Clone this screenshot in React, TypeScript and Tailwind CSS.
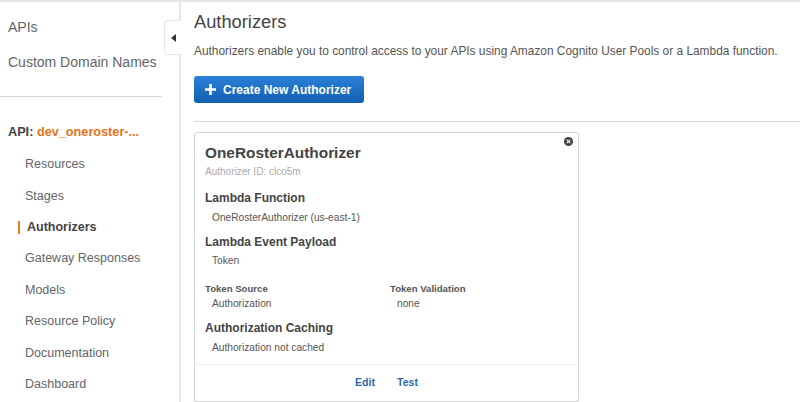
const navItems = ["Resources", "Stages", "Authorizers", "Gateway Responses", "Models", "Resource Policy", "Documentation", "Dashboard"];

function SideNav() {
	return (
		<aside className="relative w-[181px] shrink-0 border-r-2 border-[#e4e6e8] pl-2 text-[#5f6569]">
			<div className="pt-[13px] text-[14px] leading-[24px]">APIs</div>
			<div className="mt-[11px] text-[14px] leading-[24px]">Custom Domain Names</div>
			<div className="mt-[22px] mr-[17px] -ml-2 h-px bg-[#d5d8da]"></div>
			<div className="mt-[26px] text-[12.7px] leading-[18px] font-bold text-[#444]">
				API: <span className="text-[#e8711a]">dev_oneroster-...</span>
			</div>
			<nav className="mt-[8px] flex flex-col text-[12.5px]">
				{navItems.map((item) =>
					item === "Authorizers" ? (
						<div key={item} className="flex h-[31.4px] items-center pl-[10px] font-bold text-[#444]">
							<span className="mr-[7px] h-[13px] w-[2px] bg-[#e8811a]"></span>
							{item}
						</div>
					) : (
						<div key={item} className="flex h-[31.4px] items-center pl-[17px]">
							{item}
						</div>
					),
				)}
			</nav>
			<button className="absolute top-[18px] right-[-2px] flex h-[35px] w-[17px] items-center justify-center rounded-l-[4px] border border-r-0 border-[#e4e6e8] bg-white">
				<span className="h-0 w-0 border-y-[4px] border-r-[5px] border-y-transparent border-r-[#333]"></span>
			</button>
		</aside>
	);
}

function Field({ label, value }: { label: string; value: string }) {
	return (
		<div className="mt-[9px]">
			<div className="text-[12px] leading-[16px] font-bold text-[#444]">{label}</div>
			<div className="mt-[4.5px] pl-[7px] text-[10.2px] leading-[14px] text-[#555]">{value}</div>
		</div>
	);
}

function SmallField({ label, value }: { label: string; value: string }) {
	return (
		<div>
			<div className="text-[9.6px] leading-[14px] font-bold text-[#555]">{label}</div>
			<div className="mt-[1px] pl-[7px] text-[10.2px] leading-[14px] text-[#555]">{value}</div>
		</div>
	);
}

function AuthorizerCard() {
	return (
		<div className="relative w-[385px] rounded-[3px] border border-[#d5d8da] shadow-[0_1px_1px_#ccc]">
			<div className="absolute top-[4px] right-[5px] flex h-[9px] w-[9px] items-center justify-center rounded-full bg-[#444]">
				<svg width="5" height="5" viewBox="0 0 5 5">
					<path d="M0.8 0.8 4.2 4.2M4.2 0.8 0.8 4.2" stroke="#fff" strokeWidth="1.1" />
				</svg>
			</div>
			<div className="h-[231px] pt-[10px] pr-[10px] pl-[10px]">
				<div className="text-[15.4px] leading-[20px] font-bold text-[#444]">OneRosterAuthorizer</div>
				<div className="mt-[2px] pb-[2px] text-[10px] leading-[14px] text-[#aaa]">Authorizer ID: clco5m</div>
				<Field label="Lambda Function" value="OneRosterAuthorizer (us-east-1)" />
				<Field label="Lambda Event Payload" value="Token" />
				<div className="mt-[14px] grid grid-cols-[185px_1fr]">
					<SmallField label="Token Source" value="Authorization" />
					<SmallField label="Token Validation" value="none" />
				</div>
				<Field label="Authorization Caching" value="Authorization not cached" />
			</div>
			<div className="flex h-[37px] items-center justify-center gap-[22px] border-t border-[#f0f1f2] text-[10.6px] font-bold text-[#2f68ad]">
				<span>Edit</span>
				<span>Test</span>
			</div>
		</div>
	);
}

export default function App() {
	return (
		<div className="flex h-[402px] w-[800px] overflow-hidden border-t-2 border-[#e4e6e8] bg-white font-['Liberation_Sans',Arial,sans-serif]">
			<SideNav />
			<main className="flex-1 pt-[8px] pl-[13px]">
				<h1 className="text-[18.3px] leading-[24px] text-[#444]">Authorizers</h1>
				<p className="mt-[9px] text-[11.9px] leading-[16px] text-[#555]">
					Authorizers enable you to control access to your APIs using Amazon Cognito User Pools or a Lambda function.
				</p>
				<button className="mt-[17px] flex h-[27px] w-[170px] items-center gap-[7px] rounded-[3px] bg-gradient-to-b from-[#2a81d8] to-[#125fb0] pl-[11px] text-[12px] font-bold text-white">
					<svg width="11" height="11" viewBox="0 0 11 11">
						<path d="M5.5 0v11M0 5.5h11" stroke="#fff" strokeWidth="2.6" />
					</svg>
					Create New Authorizer
				</button>
				<div className="mt-[18px] h-px bg-[#d5d8da]"></div>
				<div className="mt-[10px]">
					<AuthorizerCard />
				</div>
			</main>
		</div>
	);
}
